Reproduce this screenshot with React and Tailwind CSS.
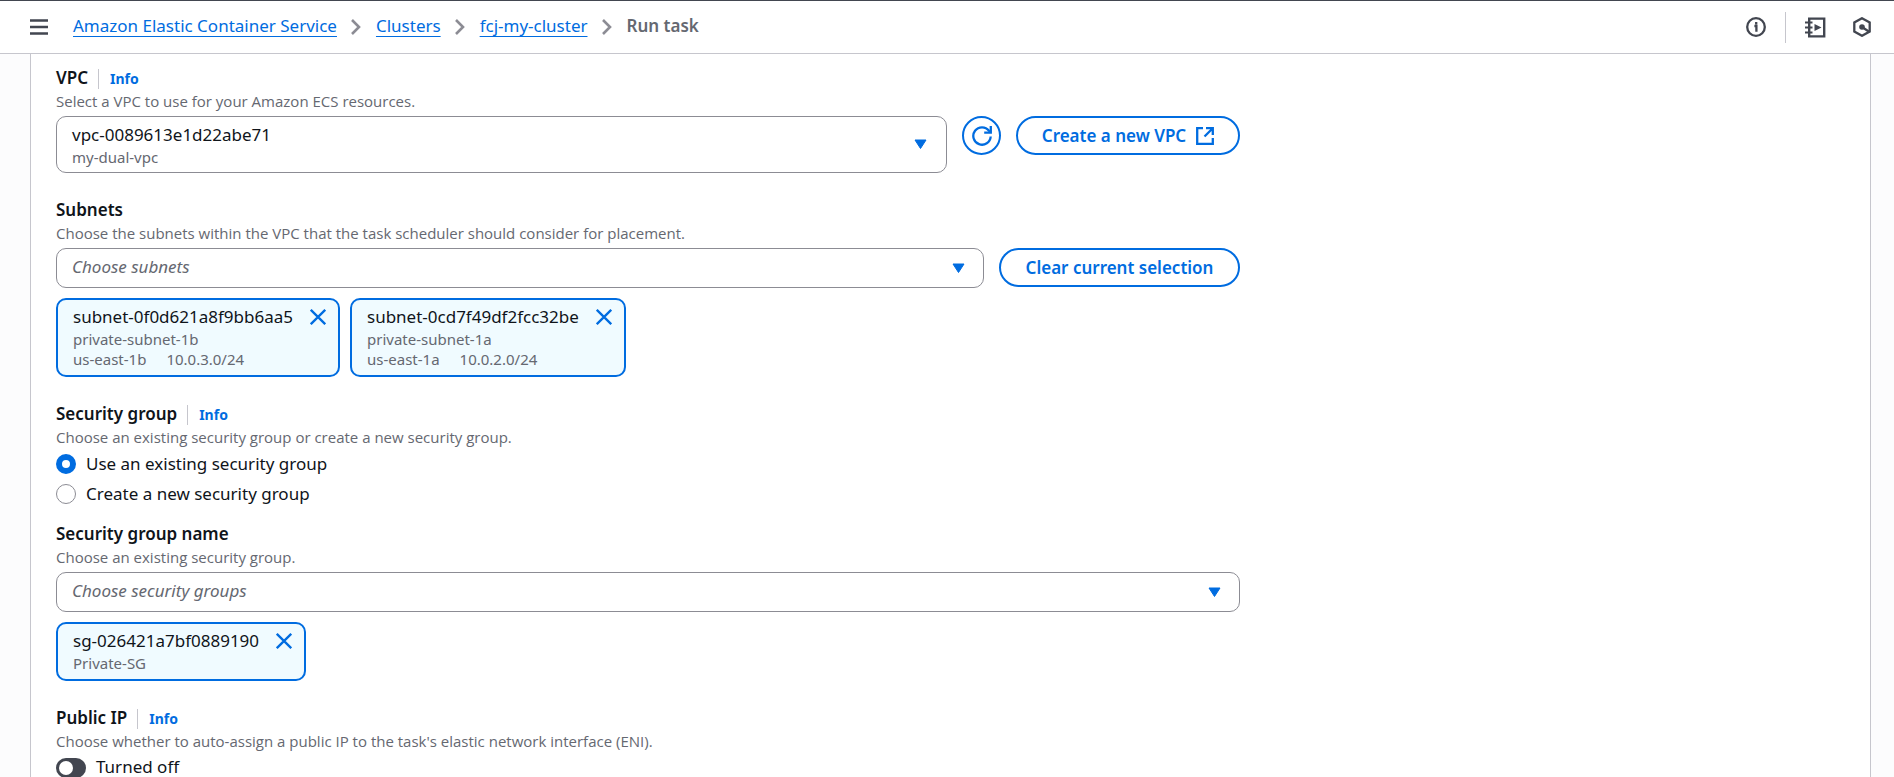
import { useState } from "react";

const crumbs = ["Amazon Elastic Container Service", "Clusters", "fcj-my-cluster"];

function Chevron() {
  return (
    <svg className="h-4 w-[10px] shrink-0" viewBox="0 0 10 16" fill="none" stroke="#8c8c94" strokeWidth="2.6" aria-hidden="true">
      <path d="M1 1l7 7-7 7" />
    </svg>
  );
}

function Caret() {
  return (
    <svg className="h-[11px] w-[13px] shrink-0" viewBox="0 0 13 11" fill="#006ce0" stroke="#006ce0" strokeLinejoin="round" aria-hidden="true">
      <path d="M1 1h11L6.5 9.5z" />
    </svg>
  );
}

function Field({ label, htmlFor, info, description, children }) {
  return (
    <div>
      <div className="flex h-[25px] items-center">
        <label htmlFor={htmlFor} className="pb-0.5 font-semibold">{label}</label>
        {info && (
          <a href="#info" className="ml-[10px] flex h-5 items-center border-l border-[#c6c6cd] pl-[11px] text-[14px] font-bold text-[#006ce0]">
            Info
          </a>
        )}
      </div>
      <p className="font-['Open_Sans','Noto_Sans',sans-serif] text-[15px] leading-5 text-[#656871]">{description}</p>
      {children}
    </div>
  );
}

function Select({ id, placeholder }) {
  return (
    <div className="relative flex grow items-center">
      <select id={id} defaultValue="" className="h-10 w-full appearance-none rounded-[10px] border border-[#8c8c94] bg-white px-[15px] pb-1 text-[#656871] italic">
        <option value="">{placeholder}</option>
      </select>
      <span className="pointer-events-none absolute right-[19px]"><Caret /></span>
    </div>
  );
}

function Token({ name, detail, zone, cidr }) {
  return (
    <li className="flex items-start gap-[17px] rounded-[10px] border-2 border-[#006ce0] bg-[#f0fbff] py-[5px] pr-[12px] pl-[15px]">
      <div>
        <div className="leading-6">{name}</div>
        <div className="text-[15px] leading-5 text-[#656871]">{detail}</div>
        {zone && (
          <div className="flex gap-5 text-[15px] leading-5 text-[#656871]">
            <span>{zone}</span>
            <span>{cidr}</span>
          </div>
        )}
        <div className="h-px" />
      </div>
      <button type="button" aria-label={"Remove " + name} className="flex h-6 items-center">
        <svg className="size-4" viewBox="0 0 16 16" fill="none" stroke="#006ce0" strokeWidth="2.3">
          <path d="M.8.8l14.4 14.4M15.2.8L.8 15.2" />
        </svg>
      </button>
    </li>
  );
}

function Radio({ label, ...props }) {
  return (
    <label className="flex h-6 items-center gap-[10px]">
      <input
        type="radio"
        name="security-group"
        className="size-5 appearance-none rounded-full border border-[#8c8c94] bg-white checked:border-[6px] checked:border-[#006ce0]"
        {...props}
      />
      <span className="pb-0.5">{label}</span>
    </label>
  );
}

export default function App() {
  const [publicIp, setPublicIp] = useState(false);
  const outlined = "flex h-[39px] shrink-0 items-center justify-center rounded-full border-2 border-[#006ce0] bg-white font-semibold text-[#006ce0]";
  return (
    <div className="flex h-screen flex-col overflow-hidden bg-[#fcfcfd] font-['Noto_Sans','Open_Sans',sans-serif] text-[17px] leading-[25px] text-[#0f141a]">
      <header className="flex h-[54px] shrink-0 items-center justify-between border-t border-b border-t-[#424650] border-b-[#c6c6cd] bg-white pr-[23px] pl-[30px]">
        <div className="flex items-center gap-[25px]">
          <button type="button" aria-label="Open navigation">
            <svg className="h-4 w-[18px]" viewBox="0 0 18 16" stroke="#424650" strokeWidth="2.3">
              <path d="M0 1.5h18M0 8h18M0 14.5h18" />
            </svg>
          </button>
          <nav aria-label="Breadcrumbs" className="flex items-center gap-[15px]">
            {crumbs.map((c) => (
              <span key={c} className="flex items-center gap-[14px]">
                <a href="#crumb" className="pb-1 text-[#006ce0] underline decoration-1 underline-offset-[4px] [text-decoration-skip-ink:none]">{c}</a>
                <Chevron />
              </span>
            ))}
            <span className="pb-1 font-semibold text-[#656871]">Run task</span>
          </nav>
        </div>
        <div className="flex items-center">
          <button type="button" aria-label="Info panel">
            <svg className="size-5" viewBox="0 0 20 20" fill="none" stroke="#424650" strokeWidth="2.3">
              <circle cx="10" cy="10" r="8.8" />
              <path d="M8.4 9h2v5.8M10.2 5v2.4" />
            </svg>
          </button>
          <div className="mx-[19px] h-[31px] w-px bg-[#c6c6cd]" />
          <button type="button" aria-label="Tutorials" className="mr-[27px]">
            <svg className="size-[21px]" viewBox="0 0 21 21" fill="none" stroke="#424650" strokeWidth="2.4">
              <path d="M4.2 1.6h15v17.8h-15z" />
              <path d="M0 5.5h7.5M0 10.5h7.5M0 15.5h7.5" strokeWidth="2.2" />
              <path d="M9.5 7v7l7-3.5z" fill="#424650" stroke="none" />
            </svg>
          </button>
          <button type="button" aria-label="Resources">
            <svg className="h-5 w-[18px]" viewBox="0 0 18 20" fill="none" stroke="#424650" strokeWidth="2.3">
              <path d="M9 1.2l7.7 4.2v9.2L9 18.8l-7.7-4.2V5.4z" />
              <path d="M9 10l7.5 5" strokeWidth="2.3" />
              <circle cx="9" cy="10" r="2.8" fill="#424650" stroke="none" />
            </svg>
          </button>
        </div>
      </header>

      <main className="mr-[23px] ml-[30px] grow border-x border-[#c6c6cd] bg-white px-[25px] pt-3">
        <form className="flex max-w-[1184px] flex-col gap-[25px]">
          <Field label="VPC" htmlFor="vpc" info description="Select a VPC to use for your Amazon ECS resources.">
            <div className="mt-[5px] flex items-start gap-[15px]">
              <button id="vpc" type="button" aria-haspopup="listbox" className="flex h-[57px] grow items-center justify-between rounded-[10px] border border-[#8c8c94] bg-white pr-[19px] pl-[15px] text-left">
                <span>
                  <span className="block leading-6">vpc-0089613e1d22abe71</span>
                  <span className="block text-[15px] leading-5 text-[#656871]">my-dual-vpc</span>
                </span>
                <Caret />
              </button>
              <button type="button" aria-label="Refresh VPCs" className={outlined + " w-[39px]"}>
                <svg className="size-5" viewBox="0 0 20 20" fill="none" stroke="#006ce0" strokeWidth="2.3">
                  <path d="M18.7 10.5A8.7 8.7 0 1 1 17 4.8l1.7 1.7" />
                  <path d="M18.8 0v6.6h-6.6" />
                </svg>
              </button>
              <button type="button" className={outlined + " w-[224px] gap-[10px]"}>
                Create a new VPC
                <svg className="size-[18px]" viewBox="0 0 18 18" fill="none" stroke="#006ce0" strokeWidth="2.3">
                  <path d="M7 1.2H1.2v15.6h15.6V11" />
                  <path d="M10 1.2h6.8V8M16.5 1.5L8.5 9.5" />
                </svg>
              </button>
            </div>
          </Field>

          <Field label="Subnets" htmlFor="subnets" description="Choose the subnets within the VPC that the task scheduler should consider for placement.">
            <div className="mt-[5px] flex items-start gap-[15px]">
              <Select id="subnets" placeholder="Choose subnets" />
              <button type="button" className={outlined + " w-[241px]"}>Clear current selection</button>
            </div>
            <ul className="mt-[10px] flex gap-[10px]">
              <Token name="subnet-0f0d621a8f9bb6aa5" detail="private-subnet-1b" zone="us-east-1b" cidr="10.0.3.0/24" />
              <Token name="subnet-0cd7f49df2fcc32be" detail="private-subnet-1a" zone="us-east-1a" cidr="10.0.2.0/24" />
            </ul>
          </Field>

          <div className="flex flex-col gap-4">
            <Field label="Security group" htmlFor="sg-existing" info description="Choose an existing security group or create a new security group.">
              <div className="mt-[5px] flex flex-col gap-[6px]">
                <Radio id="sg-existing" label="Use an existing security group" defaultChecked />
                <Radio label="Create a new security group" />
              </div>
            </Field>
            <Field label="Security group name" htmlFor="sg-name" description="Choose an existing security group.">
              <div className="mt-[5px] flex">
                <Select id="sg-name" placeholder="Choose security groups" />
              </div>
              <ul className="mt-[10px] flex gap-[10px]">
                <Token name="sg-026421a7bf0889190" detail="Private-SG" />
              </ul>
            </Field>
          </div>

          <Field label="Public IP" htmlFor="public-ip" info description="Choose whether to auto-assign a public IP to the task's elastic network interface (ENI).">
            <label className="mt-[5px] flex h-6 items-center gap-[10px]">
              <input
                id="public-ip"
                type="checkbox"
                role="switch"
                checked={publicIp}
                onChange={(e) => setPublicIp(e.target.checked)}
                className="flex h-5 w-[30px] appearance-none items-center rounded-full bg-[#424650] px-[3px] before:size-[14px] before:rounded-full before:bg-white before:content-[''] checked:justify-end checked:bg-[#006ce0]"
              />
              <span className="pb-0.5 leading-5">{publicIp ? "Turned on" : "Turned off"}</span>
            </label>
          </Field>
        </form>
      </main>
    </div>
  );
}
